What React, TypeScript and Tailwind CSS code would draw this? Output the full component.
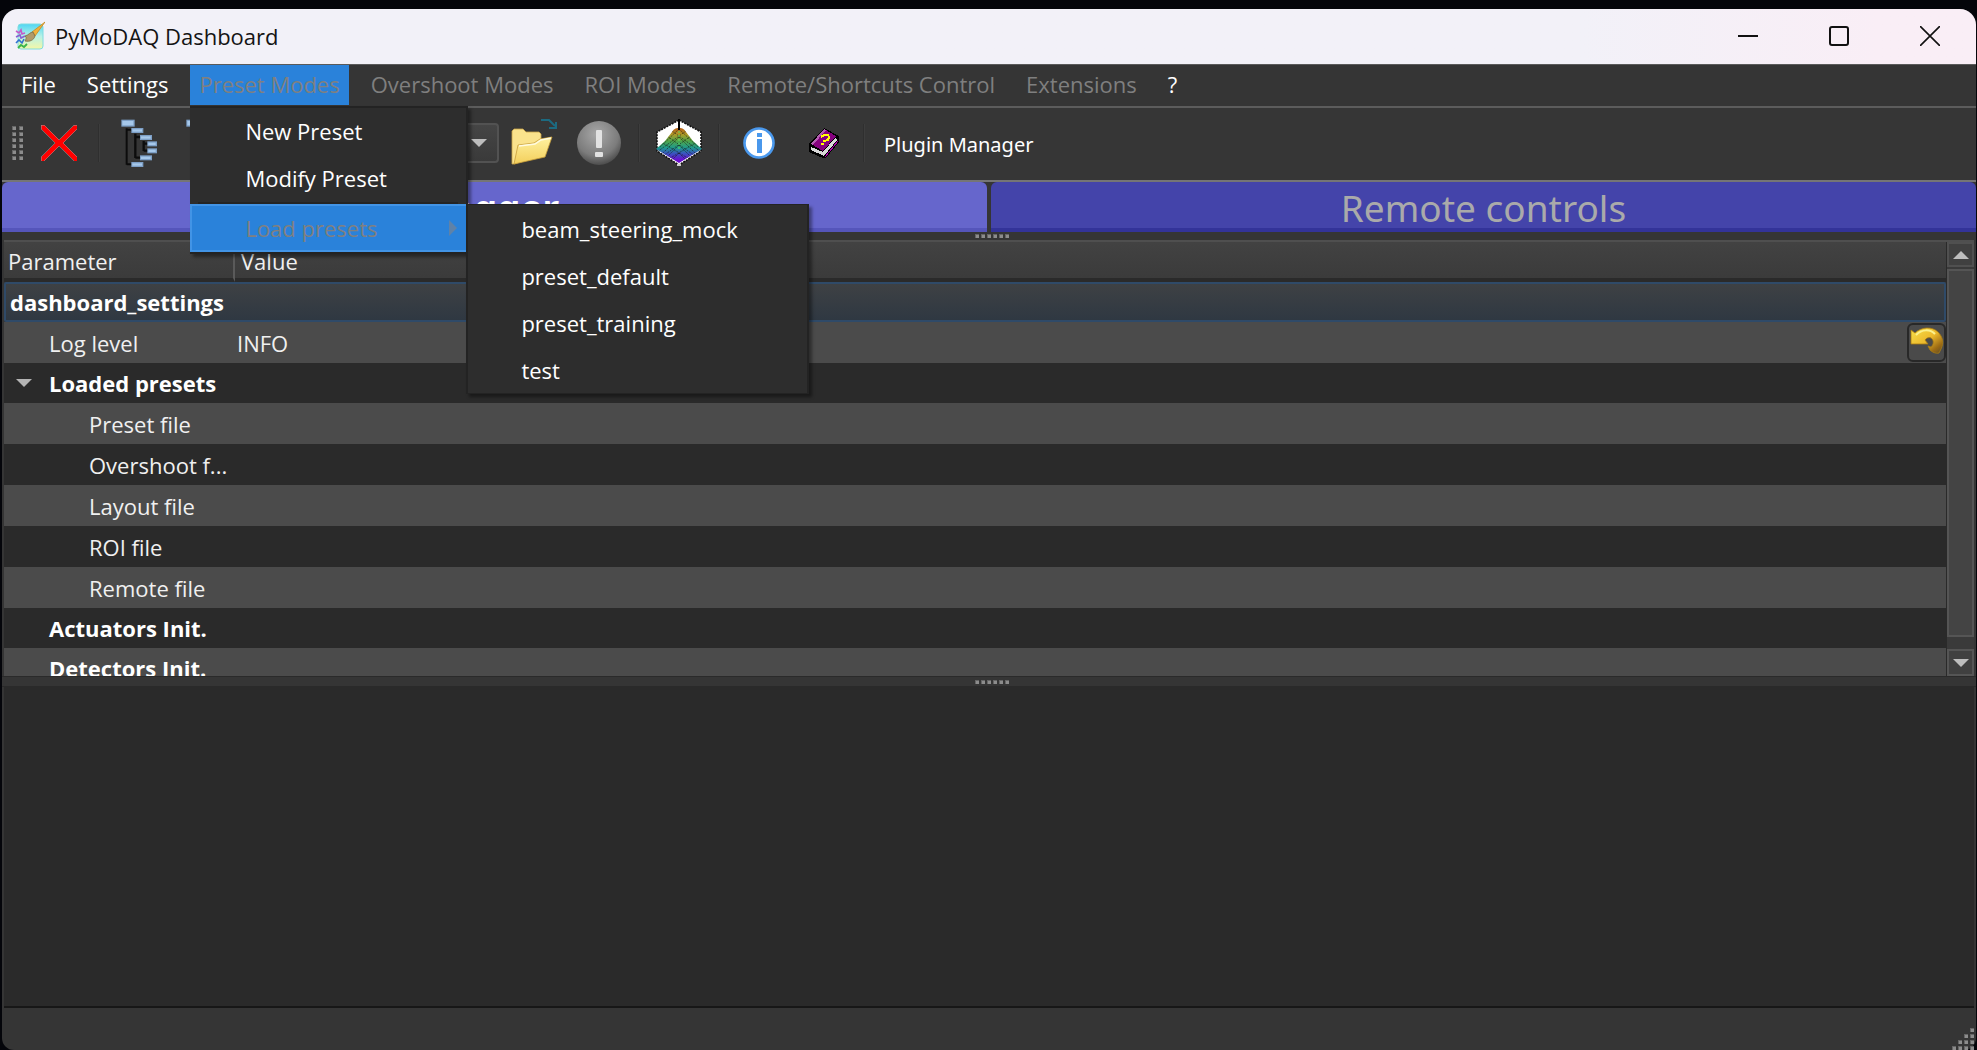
import type { ReactNode } from 'react';

type RowKind = 'root' | 'group' | 'leaf';

interface ParamRow {
  name: string;
  value?: string;
  kind: RowKind;
  indent: string;
  expanded?: boolean;
  resettable?: boolean;
}

const PARAM_ROWS: ParamRow[] = [
  { name: 'dashboard_settings', kind: 'root', indent: 'pl-[5px]' },
  { name: 'Log level', value: 'INFO', kind: 'leaf', indent: 'pl-[45px]', resettable: true },
  { name: 'Loaded presets', kind: 'group', indent: 'pl-[45px]', expanded: true },
  { name: 'Preset file', kind: 'leaf', indent: 'pl-[85px]' },
  { name: 'Overshoot f...', kind: 'leaf', indent: 'pl-[85px]' },
  { name: 'Layout file', kind: 'leaf', indent: 'pl-[85px]' },
  { name: 'ROI file', kind: 'leaf', indent: 'pl-[85px]' },
  { name: 'Remote file', kind: 'leaf', indent: 'pl-[85px]' },
  { name: 'Actuators Init.', kind: 'group', indent: 'pl-[45px]' },
  { name: 'Detectors Init.', kind: 'group', indent: 'pl-[45px]' },
];

const PRESETS = ['beam_steering_mock', 'preset_default', 'preset_training', 'test'];

function AppIcon() {
  return (
    <svg viewBox="0 0 30 30" className="w-[30px] h-[30px]" aria-hidden="true">
      <defs>
        <linearGradient id="appBg" x1="0" y1="0" x2="0" y2="1">
          <stop offset="0" stopColor="#4fd6f4" />
          <stop offset="0.5" stopColor="#b9f2e6" />
          <stop offset="1" stopColor="#f4f7a6" />
        </linearGradient>
      </defs>
      <rect x="3" y="3" width="25" height="25" rx="3" fill="url(#appBg)" stroke="#7fdcdf" />
      <path d="M1 10l3 2 2-3 1 4 3-1" stroke="#c45ac9" strokeWidth="1.6" fill="none" />
      <path d="M1 16l4-2 1 3 4-2" stroke="#8a5fd0" strokeWidth="1.6" fill="none" />
      <path d="M1 22l3-3 3 3 2-4" stroke="#2f6fd0" strokeWidth="1.6" fill="none" />
      <path d="M3 27l3-3 3 2 3-3" stroke="#3bb54a" strokeWidth="1.8" fill="none" />
      <path d="M30 1L17 11l3 4z" fill="#f0b13c" stroke="#c68a20" strokeWidth="0.8" />
      <path d="M18 11c-3 0-4 3-8 4 2 1 1 3 0 5 5 1 9-1 10-5z" fill="#b09a6a" stroke="#7a6a45" strokeWidth="0.8" />
    </svg>
  );
}

function QuitIcon() {
  return (
    <svg viewBox="0 0 36 36" className="w-9 h-9" shapeRendering="crispEdges" aria-hidden="true">
      <path d="M0 0h3l15 15L33 0h3v4L22 18l14 14v4h-3L18 21 3 36H0v-4l14-14L0 4z" fill="#f00" stroke="#a88" strokeWidth="0.6" />
    </svg>
  );
}

function TreeIcon() {
  const nodes = [
    [10, 8, 40, 21],
    [40, 33, 36, 15],
    [66, 54, 36, 15],
    [88, 73, 29, 15],
    [88, 94, 29, 15],
    [66, 115, 36, 15],
    [40, 135, 36, 15],
  ];
  return (
    <svg viewBox="0 0 126 156" className="w-[42px] h-[52px]" aria-hidden="true">
      <g fill="none" stroke="#0c0c0c">
        <path d="M26 34v109M26 38h14M26 142h14" strokeWidth="6" />
        <path d="M52 50v73M52 60h14M52 122h14" strokeWidth="7" />
        <path d="M77 72v30M77 80h11M77 101h11" strokeWidth="7" />
      </g>
      {nodes.map(([x, y, w, h]) => (
        <g key={`${x}-${y}`}>
          <rect x={x} y={y} width={w} height={h} fill="#7d9fc6" />
          <rect x={x + 3} y={y + 4} width={w - 7} height={h - 8} fill="#a6c8ea" />
        </g>
      ))}
    </svg>
  );
}

function FolderIcon() {
  return (
    <svg viewBox="0 0 48 48" className="w-12 h-12" aria-hidden="true">
      <defs>
        <linearGradient id="folder" x1="0" y1="0" x2="0" y2="1">
          <stop offset="0" stopColor="#fff2a0" />
          <stop offset="1" stopColor="#f3cf5c" />
        </linearGradient>
      </defs>
      <path d="M2 12l2-2h9l3 3h13l2 2v22L4 45H2z" fill="#fae38c" stroke="#c9a348" strokeWidth="0.8" />
      <path d="M8 26l16-2 6-4 12-2-7 20L4 45z" fill="url(#folder)" stroke="#c79d3a" strokeWidth="0.8" />
      <path d="M9 27l16-2 6-4 10-2" stroke="#fffbe0" strokeWidth="1.4" fill="none" />
      <path d="M31 1h8l6 6M46 3v6h-7" stroke="#1c6a80" strokeWidth="2" fill="none" />
    </svg>
  );
}

function WarningIcon() {
  return (
    <svg viewBox="0 0 46 46" className="w-[46px] h-[46px]" aria-hidden="true">
      <defs>
        <radialGradient id="ball" cx="0.45" cy="0.3" r="0.7">
          <stop offset="0" stopColor="#a8a8a8" />
          <stop offset="0.7" stopColor="#7c7c7c" />
          <stop offset="1" stopColor="#4d4d4d" />
        </radialGradient>
      </defs>
      <circle cx="23" cy="23" r="22" fill="url(#ball)" />
      <rect x="20" y="10" width="6" height="18" rx="1" fill="#e2e2e2" />
      <rect x="19" y="32" width="8" height="5" rx="1" fill="#e2e2e2" />
    </svg>
  );
}

function SurfaceIcon() {
  return (
    <svg viewBox="0 0 48 48" className="w-12 h-12" aria-hidden="true">
      <defs>
        <linearGradient id="heat" x1="0" y1="0" x2="0" y2="1">
          <stop offset="0" stopColor="#e0200c" />
          <stop offset="0.14" stopColor="#b8460f" />
          <stop offset="0.32" stopColor="#b09a28" />
          <stop offset="0.46" stopColor="#4fa64a" />
          <stop offset="0.6" stopColor="#1f9a8c" />
          <stop offset="0.72" stopColor="#3a52c0" />
          <stop offset="0.85" stopColor="#6a10d0" />
          <stop offset="1" stopColor="#6a00c8" />
        </linearGradient>
        <clipPath id="hill">
          <path d="M24 9c4 0 5 1 7 4l7 9c3 3 6 5 9 8L24 44 1 30c3-3 6-5 9-8l7-9c2-3 3-4 7-4z" />
        </clipPath>
      </defs>
      <path d="M24 1L46 13v19L24 46 2 32V13z" fill="#fff" stroke="#111" strokeWidth="1.6" strokeDasharray="2 1" />
      <g clipPath="url(#hill)">
        <rect width="48" height="48" fill="url(#heat)" />
        <path
          d="M24 10L5 28M24 10l19 18M24 18L8 34M24 18l16 16M24 26L12 38M24 26l12 12M24 34l-8 8M24 34l8 8M12 17l28 20M36 17L8 37M6 23l30 18M42 23L12 41M17 12l29 21M31 12L2 33"
          stroke="#141414"
          strokeWidth="1"
          strokeOpacity="0.55"
          strokeDasharray="2 1"
          fill="none"
        />
        <path d="M24 12v20" stroke="#58e060" strokeWidth="1" strokeDasharray="2 2" />
      </g>
      <path d="M24 0v11" stroke="#000" strokeWidth="2" />
      <path d="M22 46h4" stroke="#ccc" strokeWidth="2" />
    </svg>
  );
}

function InfoIcon() {
  return (
    <svg viewBox="0 0 32 32" className="w-8 h-8" aria-hidden="true">
      <circle cx="16" cy="16" r="14.5" fill="#fff" stroke="#4a98ec" strokeWidth="2.6" />
      <rect x="14" y="6" width="5" height="4" fill="#4a98ec" />
      <rect x="14" y="12" width="5" height="14" fill="#4a98ec" />
    </svg>
  );
}

function HelpBookIcon() {
  return (
    <svg viewBox="0 0 32 32" className="w-8 h-8" shapeRendering="crispEdges" aria-hidden="true">
      <path d="M16 1L31 9v6L18 31h-3L1 25v-9z" fill="#000" />
      <path d="M3 20l12 5 13-15 1 3-13 16-13-6z" fill="#d8d8d8" />
      <path d="M3 17L16 2l12 7-13 15z" fill="#86007f" />
      <path d="M3 17L16 2l2 1L5 18z" fill="#b35fb0" />
      <path d="M17 30L30 14" stroke="#b000b0" strokeWidth="1" />
      <path d="M13 10l3-2h4l1 2-1 3-4 1v1M13 17h3" stroke="#ff0" strokeWidth="2" fill="none" />
    </svg>
  );
}

function ResetIcon() {
  return (
    <svg viewBox="0 0 34 28" className="w-[34px] h-7" aria-hidden="true">
      <defs>
        <linearGradient id="undo" x1="0" y1="0" x2="1" y2="1">
          <stop offset="0" stopColor="#f7e04a" />
          <stop offset="0.5" stopColor="#ecb92c" />
          <stop offset="0.8" stopColor="#9b6a14" />
          <stop offset="1" stopColor="#5a4a2a" />
        </linearGradient>
      </defs>
      <path
        d="M1 3l4 3C11 0 22-1 28 5c5 5 6 11 3 17l-2 4c-3 1-7-1-9-3l-2-4 3 1c3-3 3-7 0-9-2-1-5 0-6 2l3 4H1z"
        fill="url(#undo)"
        stroke="#a97c12"
        strokeWidth="0.8"
      />
      <path d="M6 8c6-6 14-6 19-1" stroke="#fbf18e" strokeWidth="2" fill="none" />
    </svg>
  );
}

function Triangle({ dir, className }: { dir: 'up' | 'down' | 'right'; className: string }) {
  const d = { up: 'M0 8L8 0l8 8z', down: 'M0 0h16L8 8z', right: 'M0 0l8 8-8 8z' }[dir];
  return (
    <svg viewBox={dir === 'right' ? '0 0 8 16' : '0 0 16 8'} className={className} fill="currentColor" aria-hidden="true">
      <path d={d} />
    </svg>
  );
}

function Grip({ count }: { count: number }) {
  return (
    <>
      {Array.from({ length: count }, (_, i) => (
        <span key={i} className="size-1 bg-[#8c8c8c] border-t border-l border-[#666]" />
      ))}
    </>
  );
}

function ToolButton({ label, children }: { label: string; children: ReactNode }) {
  return (
    <button aria-label={label} className="w-[60px] h-[60px] shrink-0 flex items-center justify-center">
      {children}
    </button>
  );
}

function Separator() {
  return <span className="mx-1 h-[38px] w-0.5 shrink-0 bg-[#2f2f2f] border-r border-[#3d3d3d]" />;
}

function MenuButton({ label, disabled }: { label: string; disabled?: boolean }) {
  return (
    <button
      className={['h-10 px-[9px] pb-0.5 whitespace-nowrap', disabled ? 'text-[#7f7f7f]' : 'text-white'].join(' ')}
    >
      {label}
    </button>
  );
}

function PresetMenu() {
  return (
    <div className="relative">
      <button className="h-10 px-[9px] pb-0.5 whitespace-nowrap bg-[#2a82da] text-[#808080]">Preset Modes</button>
      <div
        role="menu"
        className="absolute top-[41px] left-0 z-20 w-[278px] bg-[#2d2d2d] border-2 border-l-0 border-[#232323] text-white shadow-[3px_3px_3px_rgba(0,0,0,0.4)]"
      >
        <button role="menuitem" className="block h-[47px] w-full pl-[55px] pb-0.5 text-left">
          New Preset
        </button>
        <button role="menuitem" className="block h-[47px] w-full pl-[55px] pb-0.5 text-left">
          Modify Preset
        </button>
        <div className="mx-2 h-0.5 bg-[#242424]" />
        <div className="relative">
          <button
            role="menuitem"
            className="flex h-12 w-full items-center justify-between border-2 border-r-0 border-[#4294e6] bg-[#2a82da] pl-[53px] pr-[9px] text-[#808080]"
          >
            Load presets
            <Triangle dir="right" className="h-4 w-2 text-[#5f82a8]" />
          </button>
          <div
            role="menu"
            className="absolute top-0 left-full w-[343px] border-x-2 border-y border-[#232323] bg-[#2d2d2d] text-white shadow-[3px_3px_3px_rgba(0,0,0,0.4)]"
          >
            {PRESETS.map((preset) => (
              <button key={preset} role="menuitem" className="block h-[47px] w-full pl-[53px] text-left">
                {preset}
              </button>
            ))}
          </div>
        </div>
      </div>
    </div>
  );
}

function TitleBar() {
  return (
    <header className="flex h-[55px] shrink-0 items-center rounded-t-2xl bg-linear-to-r from-[#f2f1f8] from-80% to-[#f9eef6] to-95% pl-[13px] pb-0.5 text-[#141414]">
      <AppIcon />
      <h1 className="ml-2.5 flex-1">PyMoDAQ Dashboard</h1>
      <button aria-label="Minimize" className="flex h-full w-[91px] items-center justify-center">
        <svg viewBox="0 0 20 20" className="size-5" stroke="#111" strokeWidth="2">
          <path d="M0 10h20" />
        </svg>
      </button>
      <button aria-label="Maximize" className="flex h-full w-[91px] items-center justify-center">
        <svg viewBox="0 0 20 20" className="size-5" stroke="#111" strokeWidth="2" fill="none">
          <rect x="1" y="1" width="18" height="18" rx="2" />
        </svg>
      </button>
      <button aria-label="Close" className="mr-px flex h-full w-[91px] items-center justify-center">
        <svg viewBox="0 0 20 20" className="size-5" stroke="#111" strokeWidth="1.6">
          <path d="M0 0l20 20M20 0L0 20" />
        </svg>
      </button>
    </header>
  );
}

function MenuBar() {
  return (
    <nav className="flex h-[42px] shrink-0 items-start gap-[13px] border-t border-[#5a5a5a] bg-[#353535] pl-[10px]">
      <MenuButton label="File" />
      <MenuButton label="Settings" />
      <PresetMenu />
      <MenuButton label="Overshoot Modes" disabled />
      <MenuButton label="ROI Modes" disabled />
      <MenuButton label="Remote/Shortcuts Control" disabled />
      <MenuButton label="Extensions" disabled />
      <MenuButton label="?" />
    </nav>
  );
}

function ToolBar() {
  return (
    <div className="flex h-[76px] shrink-0 items-center gap-[5px] border-t-2 border-b-2 border-t-[#5c5c5c] border-b-[#757575] bg-[#363636] pl-[10px] pb-0.5">
      <div className="grid w-3 shrink-0 grid-cols-2 gap-0.5">
        <Grip count={12} />
      </div>
      <ToolButton label="Quit">
        <QuitIcon />
      </ToolButton>
      <Separator />
      <ToolButton label="Log">
        <TreeIcon />
      </ToolButton>
      <ToolButton label="Preset tree">
        <TreeIcon />
      </ToolButton>
      <div className="relative">
        <select
          aria-label="Preset"
          className="block h-10 w-[260px] appearance-none rounded border-2 border-[#525252] bg-linear-to-b from-[#454545] to-[#3a3a3a]"
        />
        <Triangle dir="down" className="pointer-events-none absolute top-4 right-3 h-2 w-4 text-[#bdbdbd]" />
      </div>
      <ToolButton label="Load preset">
        <FolderIcon />
      </ToolButton>
      <ToolButton label="Log errors">
        <WarningIcon />
      </ToolButton>
      <Separator />
      <ToolButton label="Scan">
        <SurfaceIcon />
      </ToolButton>
      <Separator />
      <ToolButton label="About">
        <InfoIcon />
      </ToolButton>
      <ToolButton label="Help">
        <HelpBookIcon />
      </ToolButton>
      <Separator />
      <button className="ml-2.5 pt-1 whitespace-nowrap font-['Noto_Sans',sans-serif] text-[20px] text-white">Plugin Manager</button>
    </div>
  );
}

function DockTabs() {
  return (
    <div className="grid h-[50px] shrink-0 grid-cols-2 gap-1 font-['Noto_Sans',sans-serif] text-[37px] leading-[40px]">
      <button className="rounded-t-md border-b-4 border-[#5555bb] bg-[#6666cc] pt-1.5 font-bold text-white">Logger</button>
      <button className="rounded-t-md border-b-4 border-[#333399] bg-[#4444aa] pt-1.5 text-[#aaa]">Remote controls</button>
    </div>
  );
}

function ParameterTree() {
  return (
    <div className="mx-0.5 flex h-[436px] shrink-0 overflow-hidden border-t-2 border-[#4f4f4f]">
      <div className="min-w-0 flex-1 overflow-hidden">
        <table className="w-full table-fixed border-separate border-spacing-0">
          <thead>
            <tr className="h-10 bg-linear-to-b from-[#424242] to-[#3a3a3a] text-left text-[#f0f0f0]">
              <th className="w-[231px] border-r-2 border-b-4 border-r-[#5a5a5a] border-b-[#2a2a2a] p-0 pt-0.5 pl-1 font-normal">Parameter</th>
              <th className="border-b-4 border-[#2a2a2a] p-0 pt-0.5 pl-[6px] font-normal">Value</th>
            </tr>
          </thead>
          <tbody>
            {PARAM_ROWS.map((row, i) =>
              row.kind === 'root' ? (
                <tr key={row.name} className="h-10">
                  <td
                    colSpan={2}
                    className="rounded-xs border-2 border-[#2f4a68] bg-linear-to-b from-[#3e4144] to-[#2f3842] p-0 pl-1 font-bold text-white"
                  >
                    {row.name}
                  </td>
                </tr>
              ) : (
                <tr
                  key={row.name}
                  className={[
                    row.kind === 'leaf' ? 'h-[41px] text-[#f0f0f0]' : 'h-10 font-bold text-white',
                    i % 2 ? 'bg-[#4b4b4b]' : 'bg-[#2a2a2a]',
                  ].join(' ')}
                >
                  <td className={['relative p-0 whitespace-nowrap', row.indent].join(' ')}>
                    {row.expanded && <Triangle dir="down" className="absolute top-4 left-3 h-2 w-4 text-[#b4b4b4]" />}
                    {row.name}
                  </td>
                  <td className="p-0 pl-0.5">
                    <div className="flex items-center justify-between">
                      {row.value}
                      {row.resettable && (
                        <button
                          aria-label="Reset to default"
                          className="flex size-[39px] items-start justify-center rounded-md border-2 border-[#282828] bg-[#4a4a4a] pt-0.5"
                        >
                          <ResetIcon />
                        </button>
                      )}
                    </div>
                  </td>
                </tr>
              ),
            )}
          </tbody>
        </table>
      </div>
      <div className="flex w-7 shrink-0 flex-col border-l border-[#2a2a2a] bg-[#3a3a3a]">
        <button aria-label="Scroll up" className="flex h-[25px] items-center justify-center border-2 border-[#505050] bg-[#404040]">
          <Triangle dir="up" className="h-2 w-4 text-[#bdbdbd]" />
        </button>
        <div className="mt-0.5 mb-3 flex-1 border-2 border-[#555] bg-[#444]" />
        <button aria-label="Scroll down" className="flex h-[27px] items-center justify-center border-2 border-[#555] bg-[#404040]">
          <Triangle dir="down" className="h-2 w-4 text-[#bdbdbd]" />
        </button>
      </div>
    </div>
  );
}

export default function App() {
  return (
    <div className="min-h-screen flex flex-col bg-[#04050a] pt-[9px] pl-0.5 pr-px font-['Open_Sans',sans-serif] text-[22px] leading-[30px]">
      <div className="flex flex-1 flex-col rounded-t-2xl rounded-b-xl bg-[#353535]">
        <TitleBar />
        <MenuBar />
        <ToolBar />
        <DockTabs />
        <div className="flex h-2 shrink-0 items-center justify-center gap-0.5 pl-1.5">
          <Grip count={6} />
        </div>
        <ParameterTree />
        <div className="flex h-[11px] shrink-0 items-center justify-center gap-0.5 border-t border-b border-[#2a2a2a] pl-1.5">
          <Grip count={6} />
        </div>
        <main className="mx-0.5 flex-1 border-b-2 border-[#171717] bg-[#2a2a2a]" />
        <footer className="flex h-[42px] shrink-0 items-end justify-end pr-0.5">
          <div className="flex flex-col items-end gap-0.5">
            {[1, 2, 3, 4].map((n) => (
              <div key={n} className="flex gap-0.5">
                <Grip count={n} />
              </div>
            ))}
          </div>
        </footer>
      </div>
    </div>
  );
}
